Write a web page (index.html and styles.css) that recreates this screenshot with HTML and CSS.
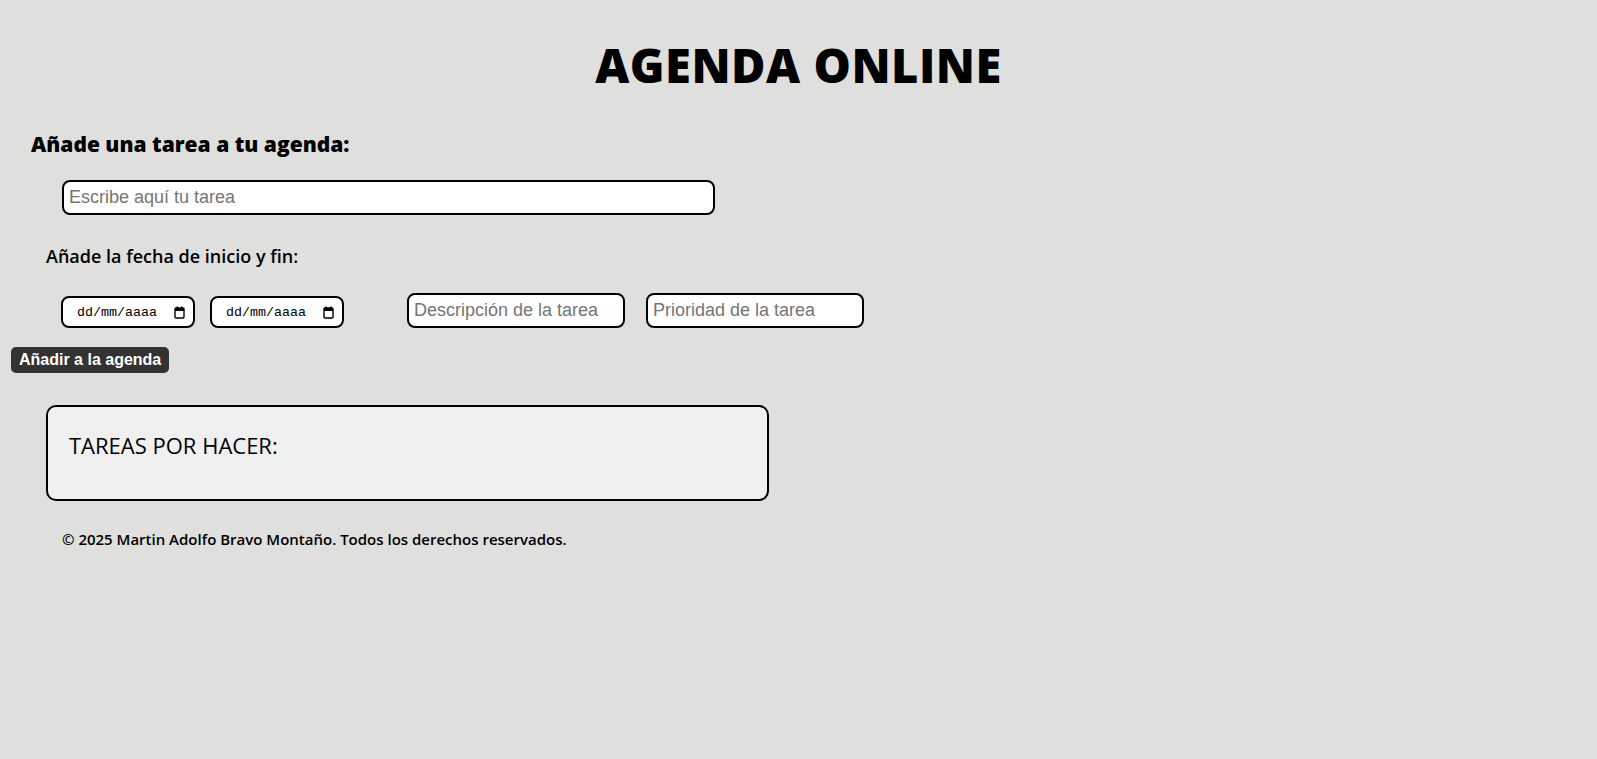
FILE: index.html
```html
<!DOCTYPE html>
<html lang="es">
<head>
<meta charset="utf-8">
<title>Agenda Online</title>
<link rel="stylesheet" href="styles.css">
</head>
<body>
<header class="top">
  <h1 class="title">AGENDA ONLINE</h1>
</header>
<main class="main">
  <h2 class="subtitle">Añade una tarea a tu agenda:</h2>
  <input class="task-input" type="text" placeholder="Escribe aquí tu tarea">
  <p class="dates-label">Añade la fecha de inicio y fin:</p>
  <div class="row">
    <div class="dates">
      <label class="date-field">
        <input class="date-text" type="text" placeholder="dd/mm/aaaa">
        <svg class="cal-icon" width="11" height="13" viewBox="0 0 11 13" aria-hidden="true">
          <rect x="1" y="2" width="9" height="10" rx="1" fill="none" stroke="#000" stroke-width="1.4"/>
          <rect x="1" y="2" width="9" height="3" fill="#000"/>
          <rect x="2.5" y="0.5" width="1.4" height="2.5" fill="#000"/>
          <rect x="7.1" y="0.5" width="1.4" height="2.5" fill="#000"/>
        </svg>
      </label>
      <label class="date-field">
        <input class="date-text" type="text" placeholder="dd/mm/aaaa">
        <svg class="cal-icon" width="11" height="13" viewBox="0 0 11 13" aria-hidden="true">
          <rect x="1" y="2" width="9" height="10" rx="1" fill="none" stroke="#000" stroke-width="1.4"/>
          <rect x="1" y="2" width="9" height="3" fill="#000"/>
          <rect x="2.5" y="0.5" width="1.4" height="2.5" fill="#000"/>
          <rect x="7.1" y="0.5" width="1.4" height="2.5" fill="#000"/>
        </svg>
      </label>
    </div>
    <div class="extras">
      <input class="small-input" type="text" placeholder="Descripción de la tarea">
      <input class="small-input" type="text" placeholder="Prioridad de la tarea">
    </div>
  </div>
  <button class="add-btn" type="button">Añadir a la agenda</button>
  <section class="tasks">
    <h3 class="tasks-title">TAREAS POR HACER:</h3>
  </section>
  <footer class="footer">© 2025 Martin Adolfo Bravo Montaño. Todos los derechos reservados.</footer>
</main>
</body>
</html>
```

FILE: styles.css
```css
html, body {
  margin: 0;
  padding: 0;
  background: #dfdfdd;
  color: #000;
  font-family: "Open Sans", "Noto Sans", sans-serif;
}

.top {
  text-align: center;
}

.title {
  margin: 37px 0 0;
  font-size: 47px;
  line-height: 56px;
  font-weight: 800;
  letter-spacing: 0.5px;
}

.main {
  display: flex;
  flex-direction: column;
  align-items: flex-start;
}

.subtitle {
  margin: 39px 0 0 31px;
  font-size: 21px;
  line-height: 24px;
  font-weight: 800;
}

.task-input {
  box-sizing: border-box;
  margin: 24px 0 0 62px;
  width: 653px;
  height: 35px;
  border: 2px solid #000;
  border-radius: 8px;
  background: #fff;
  padding: 0 5px;
  font-family: "Liberation Sans", Arial, sans-serif;
  font-size: 18px;
  outline: none;
}

.task-input::placeholder,
.small-input::placeholder {
  color: #757575;
}

.dates-label {
  margin: 31px 0 0 46px;
  font-size: 18px;
  line-height: 20px;
  font-weight: 600;
}

.row {
  display: flex;
  align-items: flex-end;
  margin: 27px 0 0 61px;
  gap: 63px;
}

.dates {
  display: flex;
  gap: 15px;
}

.extras {
  display: flex;
  gap: 21px;
}

.date-field {
  box-sizing: border-box;
  display: flex;
  align-items: center;
  width: 134px;
  height: 32px;
  border: 2px solid #000;
  border-radius: 8px;
  background: #fff;
  padding: 0 8px 0 14px;
  gap: 12px;
}

.date-text {
  flex: 1;
  min-width: 0;
  border: none;
  padding: 0;
  margin: 0;
  background: transparent;
  outline: none;
  font-family: "Liberation Mono", "DejaVu Sans Mono", monospace;
  font-size: 13.33px;
  color: #000;
}

.date-text::placeholder {
  color: #000;
}

.cal-icon {
  flex: none;
  display: block;
}

.small-input {
  box-sizing: border-box;
  width: 218px;
  height: 35px;
  border: 2px solid #000;
  border-radius: 8px;
  background: #fff;
  padding: 0 5px;
  font-family: "Liberation Sans", Arial, sans-serif;
  font-size: 18px;
}

.add-btn {
  box-sizing: border-box;
  margin: 19px 0 0 11px;
  height: 26px;
  padding: 0 8px;
  border: none;
  border-radius: 5px;
  background: #333;
  color: #fff;
  font-family: "Liberation Sans", Arial, sans-serif;
  font-size: 16px;
  font-weight: 700;
}

.tasks {
  box-sizing: border-box;
  margin: 32px 0 0 46px;
  width: 723px;
  height: 96px;
  border: 2px solid #000;
  border-radius: 10px;
  background: #f0f0f0;
  padding: 23px 21px 0;
}

.tasks-title {
  margin: 0;
  font-size: 22px;
  line-height: 30px;
  font-weight: 400;
}

.footer {
  margin: 27px 0 0 62px;
  font-size: 15px;
  line-height: 22px;
  font-weight: 600;
}
```
